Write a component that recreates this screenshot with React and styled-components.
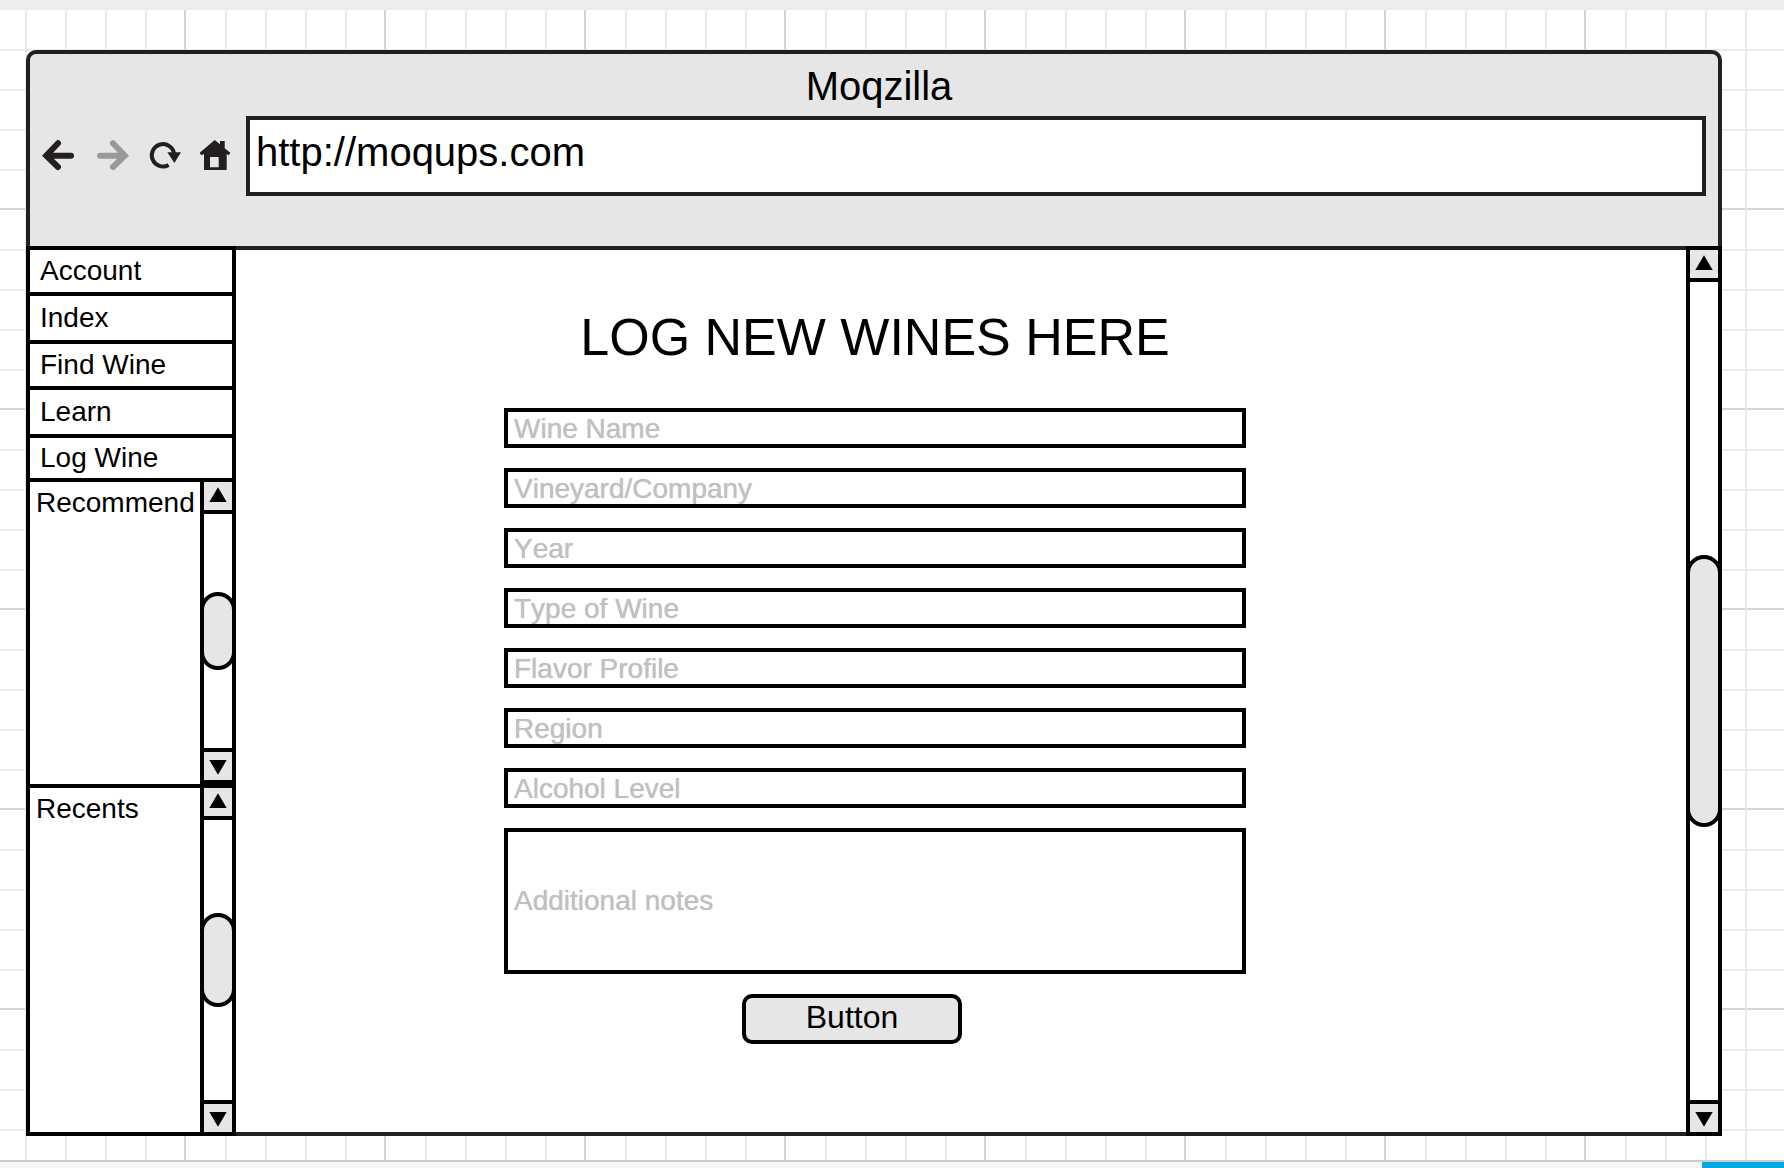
import React from "react";
import styled, { createGlobalStyle, css } from "styled-components";

const ink = "#000000";
const chrome = "#231f20";
const panel = "#e6e6e6";
const gridMinor = "#ebebeb";
const gridMajor = "#d6d6d6";

const GlobalStyle = createGlobalStyle`
  *, *::before, *::after { box-sizing: border-box; }
  body {
    margin: 0;
    background: #ffffff;
    color: ${ink};
    font-family: "Liberation Sans", Arial, sans-serif;
  }
  button, input, textarea { font: inherit; color: inherit; }
`;

const gridStops = `
  ${gridMajor} 0 2px, transparent 2px 41px,
  ${gridMinor} 41px 43px, transparent 43px 81px,
  ${gridMinor} 81px 83px, transparent 83px 121px,
  ${gridMinor} 121px 123px, transparent 123px 161px,
  ${gridMinor} 161px 163px, transparent 163px 200px
`;

const Page = styled.div`
  min-height: 100vh;
  display: flex;
  flex-direction: column;
`;

const TopStrip = styled.div`
  height: 10px;
  background: #ededed;
`;

const Canvas = styled.div`
  flex: 1;
  display: flex;
  padding: 40px 62px 24px 26px;
  background-image: linear-gradient(to right, ${gridStops}), linear-gradient(to bottom, ${gridStops});
  background-size: 200px 200px;
  background-position: 184px 198px;
`;

const BottomStrip = styled.div`
  height: 8px;
  display: flex;
  justify-content: flex-end;
  border-top: 2px solid #cccccc;
  background: #f7f7f7;
`;

const BottomAccent = styled.div`
  width: 82px;
  background: #00a8e1;
`;

const BrowserWindow = styled.div`
  flex: 1;
  display: flex;
  flex-direction: column;
`;

const BrowserHeader = styled.header`
  padding: 10px 12px 50px;
  border: 4px solid ${chrome};
  border-bottom: 0;
  border-radius: 10px 10px 0 0;
  background: ${panel};
`;

const BrowserTitle = styled.div`
  margin-bottom: 8px;
  padding-left: 10px;
  font-size: 40px;
  line-height: 44px;
  text-align: center;
`;

const Toolbar = styled.div`
  display: flex;
  align-items: center;
`;

const ToolButton = styled.button`
  display: flex;
  padding: 0;
  border: 0;
  background: none;
  color: ${chrome};

  &:disabled { color: #999999; }
`;

const AddressInput = styled.input`
  flex: 1;
  min-width: 0;
  height: 80px;
  padding: 0 6px 8px;
  border: 4px solid ${chrome};
  border-radius: 0;
  background: #ffffff;
  font-size: 40px;
`;

const BrowserBody = styled.div`
  flex: 1;
  display: flex;
`;

const Sidebar = styled.aside`
  width: 210px;
  display: flex;
  flex-direction: column;
  border: 4px solid ${ink};
  border-right: 0;
  background: #ffffff;
`;

const Nav = styled.nav`
  display: flex;
  flex-direction: column;
  border-right: 4px solid ${ink};
`;

const NavLink = styled.a`
  display: flex;
  align-items: center;
  height: 46px;
  padding-left: 10px;
  border-bottom: 4px solid ${ink};
  color: inherit;
  font-size: 28px;
  line-height: 34px;
  text-decoration: none;

  &:nth-child(even) { height: 48px; }
  &:last-child { height: 44px; }
`;

const SidePanel = styled.section`
  flex: ${(p) => p.$share} 0 0;
  display: flex;
  border-bottom: ${(p) => (p.$divided ? `4px solid ${ink}` : "0")};
`;

const SidePanelTitle = styled.h2`
  flex: 1;
  min-width: 0;
  margin: 0;
  padding: 4px 0 0 6px;
  font-size: 28px;
  font-weight: 400;
  line-height: 34px;
`;

const ScrollFrame = styled.div`
  width: 36px;
  flex: none;
  display: flex;
  flex-direction: column;
  border: solid ${ink};
  border-width: ${(p) => `${p.$top ? 4 : 0}px 4px ${p.$bottom ? 4 : 0}px`};
  background: #ffffff;
`;

const ScrollButton = styled.button`
  display: flex;
  padding: 0;
  border: 0 solid ${ink};
  border-bottom-width: ${(p) => (p.$up ? "4px" : "0")};
  border-top-width: ${(p) => (p.$up ? "0" : "4px")};
  border-radius: 0;
  background: ${panel};
`;

const ScrollTrack = styled.div`
  flex: 1;
  display: grid;
  grid-template-rows: 1fr 1fr 1fr;
`;

const ScrollThumb = styled.div`
  grid-row: 2;
  margin: 0 -4px;
  border: 4px solid ${ink};
  border-radius: 18px;
  background: ${panel};
`;

const Main = styled.main`
  flex: 1;
  min-width: 0;
  display: flex;
  flex-direction: column;
  align-items: center;
  padding: 58px 172px 0 0;
  border: solid ${chrome};
  border-width: 4px 0;
  background: #ffffff;
`;

const Heading = styled.h1`
  margin: 0 0 42px;
  font-size: 52px;
  font-weight: 400;
  line-height: 58px;
`;

const WineForm = styled.form`
  width: 100%;
  max-width: 742px;
  display: flex;
  flex-direction: column;
  gap: 20px;
`;

const fieldStyle = css`
  display: block;
  width: 100%;
  border: 4px solid ${ink};
  border-radius: 0;
  background: #ffffff;
  font-size: 28px;
  font-kerning: none;

  &::placeholder {
    color: #c0c0c0;
    opacity: 1;
    text-shadow: 0 0 1px #c0c0c0;
  }
`;

const TextField = styled.input`
  ${fieldStyle}
  height: 40px;
  padding: 2px 6px 0;
`;

const NotesField = styled.textarea`
  ${fieldStyle}
  height: 146px;
  padding: 52px 6px 0;
  line-height: 34px;
  resize: none;
`;

const SubmitButton = styled.button`
  align-self: center;
  width: 220px;
  height: 50px;
  margin-right: 46px;
  padding: 0 0 4px;
  border: 4px solid ${ink};
  border-radius: 10px;
  background: ${panel};
  font-size: 32px;
  line-height: 36px;
`;

const Icon = ({ children }) => (
  <svg width="51" height="32" viewBox="0 0 51 32" fill="none" aria-hidden="true">
    {children}
  </svg>
);

const BackIcon = () => (
  <Icon>
    <path
      d="M16 3.2 4.2 15.6 16 27M5 15.8H29"
      stroke="currentColor"
      strokeWidth="6"
      strokeLinecap="round"
    />
  </Icon>
);

const ForwardIcon = () => (
  <Icon>
    <path
      d="M20 3.2 31.8 15.6 20 27M31 15.8H7"
      stroke="currentColor"
      strokeWidth="6"
      strokeLinecap="round"
    />
  </Icon>
);

const ReloadIcon = () => (
  <Icon>
    <path
      d="M30.1 14A11.2 11.2 0 1 0 24.6 25"
      stroke="currentColor"
      strokeWidth="4"
    />
    <path d="M23.3 12.2H37L30.4 23Z" fill="currentColor" />
  </Icon>
);

const HomeIcon = () => (
  <Icon>
    <path
      fill="currentColor"
      fillRule="evenodd"
      d="M5 12.5 19.7 0 25 4.3V1H29.7V8.3L35 12.6V13.6L33.6 15.2 31.7 14V30H9V14L6.4 15.2 5 13.6ZM15 17V27.3H23.7V17Z"
    />
  </Icon>
);

const Triangle = ({ up }) => (
  <svg width="28" height="28" viewBox="0 0 28 28" aria-hidden="true">
    <path d={up ? "M14 5.3 22.7 20H5.3Z" : "M5.3 8H22.7L14 22.7Z"} />
  </svg>
);

const Scrollbar = ({ label, top, bottom }) => (
  <ScrollFrame $top={top} $bottom={bottom}>
    <ScrollButton type="button" $up aria-label={`Scroll ${label} up`}>
      <Triangle up />
    </ScrollButton>
    <ScrollTrack>
      <ScrollThumb />
    </ScrollTrack>
    <ScrollButton type="button" aria-label={`Scroll ${label} down`}>
      <Triangle />
    </ScrollButton>
  </ScrollFrame>
);

const navItems = ["Account", "Index", "Find Wine", "Learn", "Log Wine"];

const fields = [
  "Wine Name",
  "Vineyard/Company",
  "Year",
  "Type of Wine",
  "Flavor Profile",
  "Region",
  "Alcohol Level",
];

export default function App() {
  return (
    <Page>
      <GlobalStyle />
      <TopStrip />
      <Canvas>
        <BrowserWindow>
          <BrowserHeader>
            <BrowserTitle>Moqzilla</BrowserTitle>
            <Toolbar>
              <ToolButton type="button" aria-label="Back"><BackIcon /></ToolButton>
              <ToolButton type="button" aria-label="Forward" disabled><ForwardIcon /></ToolButton>
              <ToolButton type="button" aria-label="Reload"><ReloadIcon /></ToolButton>
              <ToolButton type="button" aria-label="Home"><HomeIcon /></ToolButton>
              <AddressInput type="text" aria-label="Address" defaultValue="http://moqups.com" />
            </Toolbar>
          </BrowserHeader>
          <BrowserBody>
            <Sidebar>
              <Nav>
                {navItems.map((item) => (
                  <NavLink key={item} href="#">{item}</NavLink>
                ))}
              </Nav>
              <SidePanel $share={302} $divided>
                <SidePanelTitle>Recommend</SidePanelTitle>
                <Scrollbar label="recommendations" bottom />
              </SidePanel>
              <SidePanel $share={344}>
                <SidePanelTitle>Recents</SidePanelTitle>
                <Scrollbar label="recents" />
              </SidePanel>
            </Sidebar>
            <Main>
              <Heading>LOG NEW WINES HERE</Heading>
              <WineForm onSubmit={(e) => e.preventDefault()}>
                {fields.map((name) => (
                  <TextField key={name} type="text" placeholder={name} aria-label={name} />
                ))}
                <NotesField placeholder="Additional notes" aria-label="Additional notes" />
                <SubmitButton type="submit">Button</SubmitButton>
              </WineForm>
            </Main>
            <Scrollbar label="page" top bottom />
          </BrowserBody>
        </BrowserWindow>
      </Canvas>
      <BottomStrip>
        <BottomAccent />
      </BottomStrip>
    </Page>
  );
}
